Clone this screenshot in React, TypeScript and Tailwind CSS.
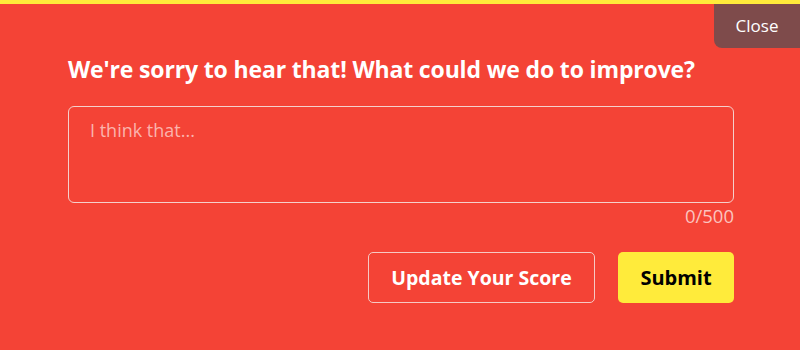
import React from "react";

export default function App() {
  return (
    <div className="w-[800px] h-[350px] bg-[#f44336] relative overflow-hidden" style={{ fontFamily: '"Open Sans", sans-serif' }}>
      <div className="h-[4px] bg-[#ffeb3b]" />
      <button className="absolute right-0 top-[4px] w-[86px] h-[44px] bg-[#7e4b4b] text-white text-[17px] rounded-bl-[8px] flex items-center justify-center">
        Close
      </button>
      <div className="pl-[68px] pr-[66px] pt-[50px]">
        <h1 className="text-white font-bold text-[23px] leading-[30px] tracking-[-0.15px]">We're sorry to hear that! What could we do to improve?</h1>
        <div className="mt-[22px] h-[97px] border border-[#f5d0cc] rounded-[6px] px-[21px] pt-[11px]">
          <div className="text-[18px] leading-[24px] text-[#fbb3ad]">I think that...</div>
        </div>
        <div className="text-right text-[18.5px] leading-[24px] text-[#fbc4bf] mt-[1px]">0/500</div>
        <div className="flex justify-end gap-[23px] mt-[24px]">
          <button className="w-[227px] h-[51px] border border-[#f6c9c4] rounded-[5px] text-white font-bold text-[19.5px]">
            Update Your Score
          </button>
          <button className="w-[116px] h-[51px] bg-[#ffeb3b] rounded-[5px] text-black font-bold text-[20px]">
            Submit
          </button>
        </div>
      </div>
    </div>
  );
}
